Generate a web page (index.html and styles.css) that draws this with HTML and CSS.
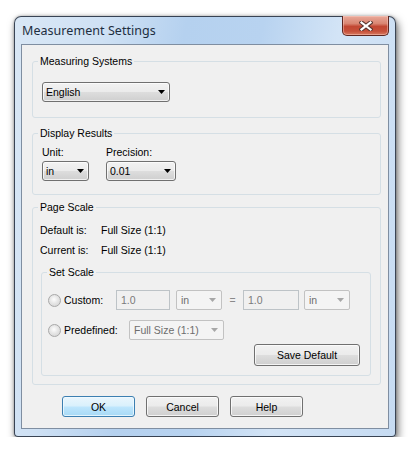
FILE: index.html
```html
<!DOCTYPE html>
<html>
<head>
<meta charset="utf-8">
<title>Measurement Settings</title>
<link rel="stylesheet" href="styles.css">
</head>
<body>
<div class="window">
  <div class="titlebar">
    <span class="title">Measurement Settings</span>
    <div class="close">
      <svg width="14" height="10" viewBox="0 0 14 10">
        <path d="M2.5 1.5 L11.5 8.5 M11.5 1.5 L2.5 8.5" stroke="#5a3630" stroke-width="4.2" stroke-linecap="square" fill="none"/>
        <path d="M2.5 1.5 L11.5 8.5 M11.5 1.5 L2.5 8.5" stroke="#ffffff" stroke-width="2.2" stroke-linecap="square" fill="none"/>
      </svg>
    </div>
  </div>
  <div class="client">
    <fieldset class="group g-systems">
      <legend>Measuring Systems</legend>
      <div class="systems-body">
        <div class="combo w-english"><span>English</span><i class="arrow"></i></div>
      </div>
    </fieldset>

    <fieldset class="group g-display">
      <legend>Display Results</legend>
      <div class="display-body">
        <div class="col col-unit">
          <span class="lbl">Unit:</span>
          <div class="combo w-unit"><span>in</span><i class="arrow"></i></div>
        </div>
        <div class="col">
          <span class="lbl">Precision:</span>
          <div class="combo w-precision"><span>0.01</span><i class="arrow"></i></div>
        </div>
      </div>
    </fieldset>

    <fieldset class="group g-page">
      <legend>Page Scale</legend>
      <div class="page-body">
        <div class="info-row"><span class="info-key">Default is:</span><span>Full Size (1:1)</span></div>
        <div class="info-row info-row2"><span class="info-key">Current is:</span><span>Full Size (1:1)</span></div>

        <fieldset class="group g-set">
          <legend>Set Scale</legend>
          <div class="set-body">
            <div class="scale-row">
              <span class="radio"></span>
              <span class="radio-lbl w-custom-lbl">Custom:</span>
              <div class="field w-in1">1.0</div>
              <div class="dcombo w-unit2"><span>in</span><i class="arrow dis"></i></div>
              <span class="eq">=</span>
              <div class="field w-in2">1.0</div>
              <div class="dcombo w-unit3"><span>in</span><i class="arrow dis"></i></div>
            </div>
            <div class="scale-row scale-row2">
              <span class="radio"></span>
              <span class="radio-lbl w-pre-lbl">Predefined:</span>
              <div class="dcombo w-pre"><span>Full Size (1:1)</span><i class="arrow dis"></i></div>
            </div>
            <div class="save-row">
              <button class="btn btn-save">Save Default</button>
            </div>
          </div>
        </fieldset>
      </div>
    </fieldset>

    <div class="buttons">
      <button class="btn btn-default">OK</button>
      <button class="btn">Cancel</button>
      <button class="btn">Help</button>
    </div>
  </div>
</div>
</body>
</html>
```

FILE: styles.css
```css
* { box-sizing: border-box; }

html, body {
  margin: 0;
  padding: 0;
  background: #ffffff;
}

body {
  padding: 16px 0 0 14px;
  font-family: "Liberation Sans", Arial, sans-serif;
  font-size: 10.5px;
  line-height: 14px;
  color: #000;
}

.window {
  width: 382px;
  height: 421px;
  display: flex;
  flex-direction: column;
  border: 1px solid rgba(30, 40, 55, 0.85);
  border-radius: 7px 7px 4px 4px;
  background:
    linear-gradient(100deg, #d9e7f5 0%, #cfe1f4 20%, #b5d1ef 38%, #b8d3f0 55%, #d3e4f6 72%, #c6dbf2 100%);
  box-shadow: 2px 4px 9px rgba(0, 0, 0, 0.55), 0 0 3px rgba(0, 0, 0, 0.3);
}

.titlebar {
  height: 27px;
  display: flex;
  align-items: flex-start;
  padding-left: 7px;
  padding-right: 6px;
}

.title {
  align-self: center;
  margin-top: 1px;
  font-family: "Noto Sans", "Open Sans", sans-serif;
  font-size: 12.5px;
  color: #1e2e40;
  letter-spacing: 0.05px;
}

.close {
  margin-left: auto;
  margin-top: -1px;
  width: 47px;
  height: 20px;
  display: flex;
  align-items: center;
  justify-content: center;
  border: 1px solid #5e2620;
  border-top: none;
  border-radius: 0 0 5px 5px;
  background: linear-gradient(#e9a99a 0%, #d98572 40%, #c24733 55%, #c6503a 80%, #d77a60 100%);
  box-shadow: inset 0 0 0 1px rgba(255, 210, 200, 0.45);
}

.client {
  flex: 1;
  margin: 0 6px 7px 6px;
  border: 1px solid #7f8ea1;
  background: #f0f0f0;
  padding: 9px 7px 0 10px;
  display: flex;
  flex-direction: column;
}

.group {
  margin: 0;
  padding: 0;
  border: 1px solid #d5dfe5;
  border-radius: 3px;
  min-width: 0;
}

.group legend {
  margin-left: 5px;
  padding: 0 2px;
  line-height: 14px;
}

.g-display { margin-top: 8px; }
.g-page { margin-top: 5px; }

.systems-body {
  padding: 14px 9px 15px 9px;
}

.combo {
  height: 20px;
  display: flex;
  align-items: center;
  justify-content: space-between;
  padding: 0 4px 0 3px;
  border: 1px solid #707070;
  border-radius: 3px;
  background: linear-gradient(#f2f2f2 0%, #ebebeb 48%, #dddddd 52%, #cfcfcf 100%);
  box-shadow: inset 0 0 0 1px rgba(255, 255, 255, 0.7);
}

.arrow {
  display: block;
  width: 7px;
  height: 4px;
  background: #000;
  clip-path: polygon(0 0, 100% 0, 50% 100%);
}

.arrow.dis { background: #a7a7a7; }

.w-english { width: 128px; }
.w-unit { width: 47px; }
.w-precision { width: 70px; }

.display-body {
  display: flex;
  gap: 17px;
  padding: 5px 9px 13px 9px;
}

.col {
  display: flex;
  flex-direction: column;
  gap: 2px;
}

.page-body {
  padding: 9px 9px 8px 7px;
}

.info-row {
  display: flex;
}

.info-row2 { margin-top: 6px; }

.info-key { width: 61px; }

.g-set {
  margin-top: 8px;
  margin-left: 1px;
}

.set-body {
  padding: 11px 10px 9px 6px;
}

.scale-row {
  display: flex;
  align-items: center;
  height: 20px;
}

.scale-row2 { margin-top: 10px; }

.radio {
  width: 13px;
  height: 13px;
  border-radius: 50%;
  border: 1px solid #a8a8a8;
  background: radial-gradient(circle at 45% 40%, #fdfdfd 0%, #e6e6e6 45%, #cfcfcf 100%);
  margin-right: 3px;
  flex: none;
}

.w-custom-lbl { width: 52px; }
.w-pre-lbl { width: 65px; }

.field {
  height: 20px;
  border: 1px solid #bdc3c7;
  background: #f0f0f0;
  color: #7a7a7a;
  padding: 2px 4px;
  line-height: 14px;
}

.w-in1 { width: 54px; margin-right: 6px; }
.w-in2 { width: 56px; margin-right: 5px; }

.dcombo {
  height: 20px;
  display: flex;
  align-items: center;
  justify-content: space-between;
  padding: 0 5px 0 4px;
  border: 1px solid #c2c2c2;
  border-radius: 2px;
  background: #f4f4f4;
  color: #6d6d6d;
}

.w-unit2, .w-unit3 { width: 46px; }
.w-pre { width: 95px; }

.eq {
  width: 21px;
  text-align: center;
  color: #8a8a8a;
}

.save-row {
  display: flex;
  justify-content: flex-end;
  margin-top: 4px;
}

.btn {
  font: inherit;
  color: #000;
  width: 73px;
  height: 21px;
  padding: 0;
  border: 1px solid #707070;
  border-radius: 3px;
  background: linear-gradient(#f2f2f2 0%, #ebebeb 48%, #dddddd 52%, #cfcfcf 100%);
  box-shadow: inset 0 0 0 1px rgba(252, 252, 252, 0.8);
}

.btn-save {
  width: 106px;
  height: 22px;
}

.btn-default {
  border-color: #3c7fb1;
  background: linear-gradient(#eaf6fd 0%, #d9f0fc 48%, #bee6fd 52%, #a7d9f5 100%);
  box-shadow: inset 0 0 0 1px rgba(240, 250, 255, 0.8);
}

.buttons {
  display: flex;
  gap: 11px;
  margin-top: 11px;
  padding-left: 30px;
}
```
